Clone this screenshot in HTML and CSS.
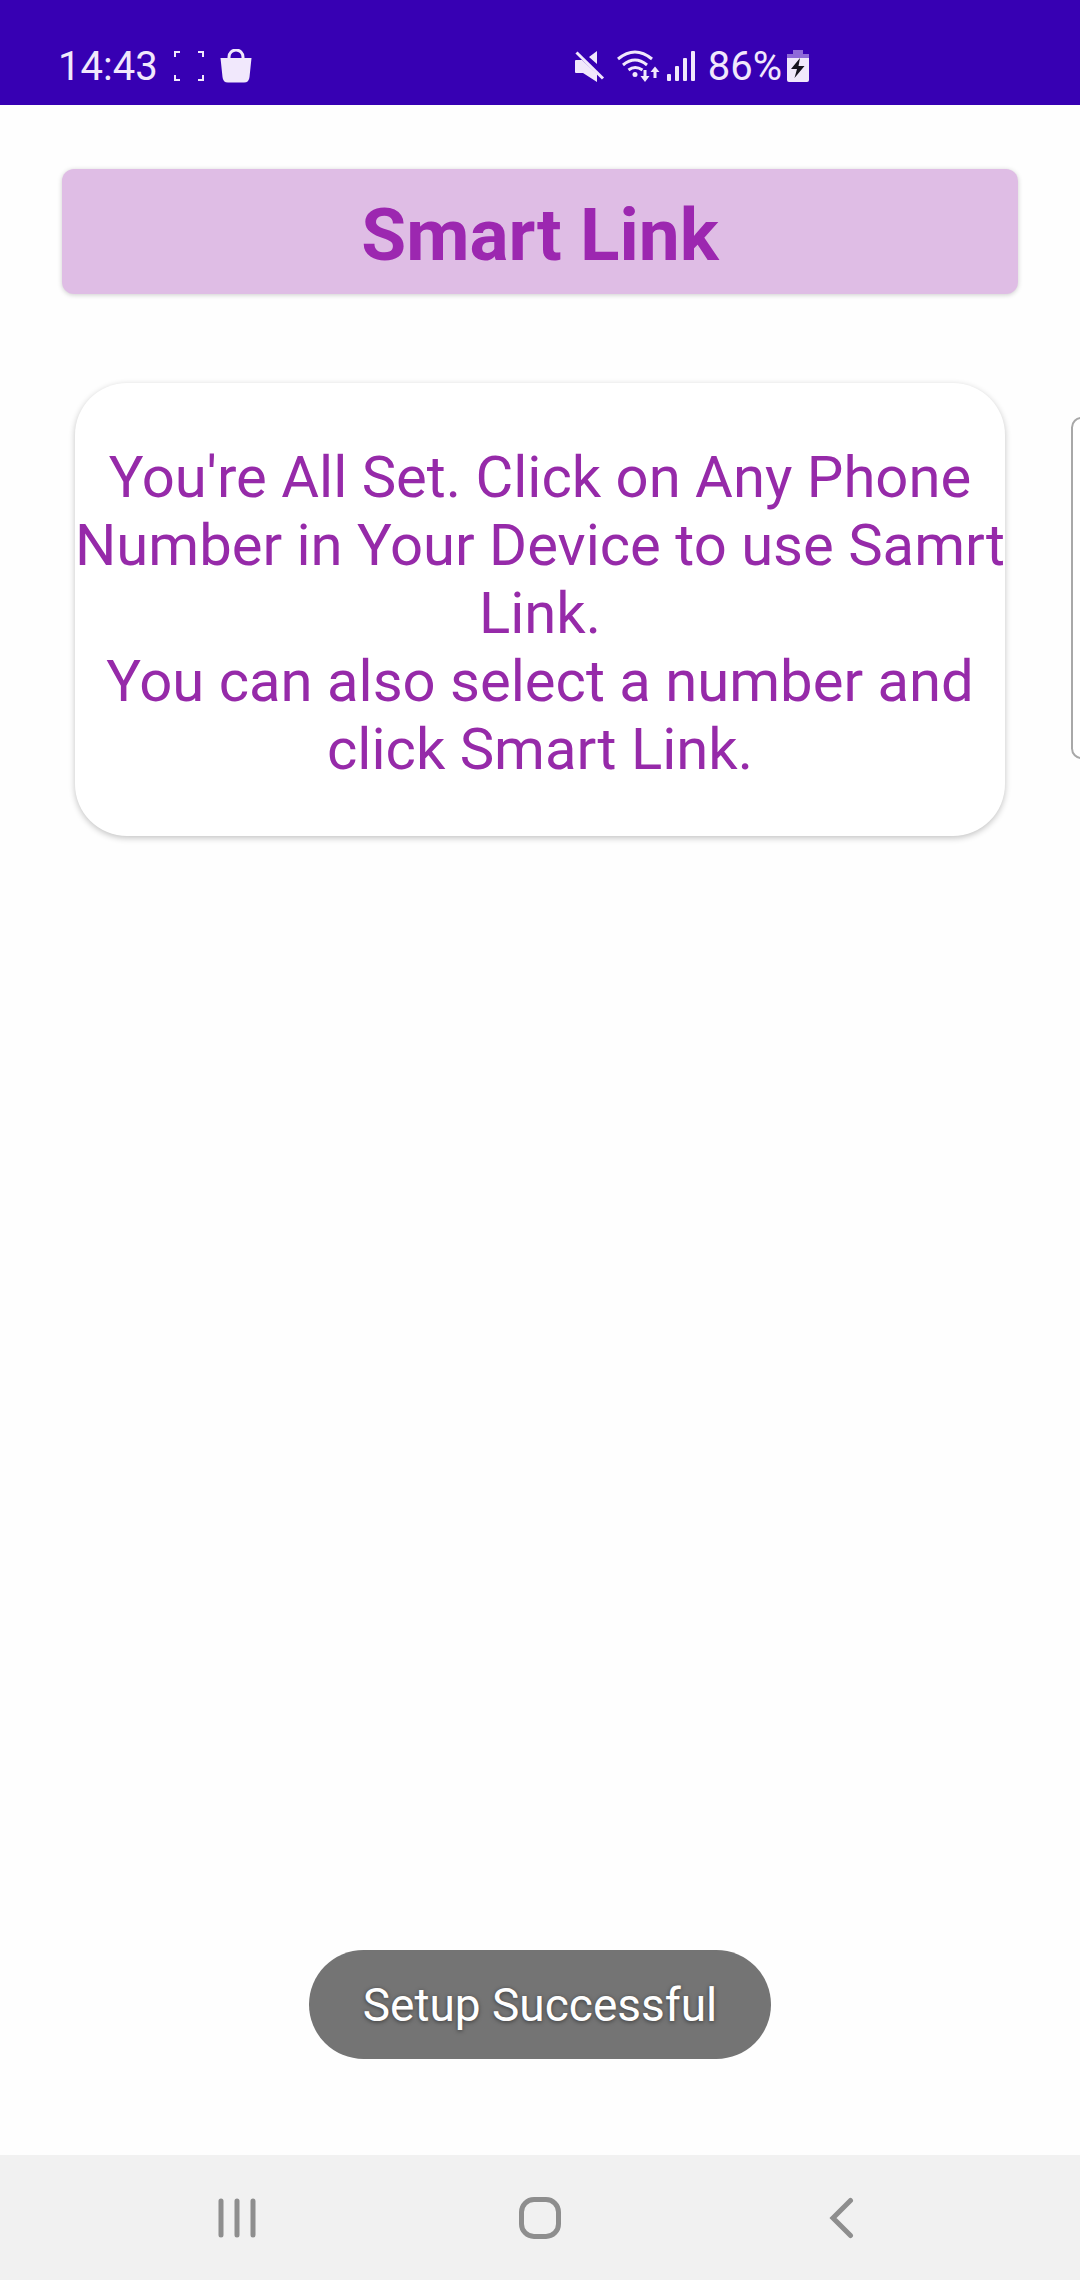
FILE: index.html
```html
<!DOCTYPE html>
<html lang="en">
<head>
<meta charset="utf-8">
<meta name="viewport" content="width=device-width, initial-scale=1">
<title>Smart Link</title>
<link rel="stylesheet" href="styles.css">
</head>
<body>
<header class="status">
  <div class="status-left">
    <span class="clock">14:43</span>
    <svg class="icon-frame" width="30" height="30" viewBox="0 0 30 30" fill="none" stroke="currentColor" stroke-width="2" aria-hidden="true"><path d="M1 6V1H6M24 1H29V6M29 24V29H24M6 29H1V24"/></svg>
    <svg width="32" height="34" viewBox="0 0 32 34" aria-hidden="true"><path fill="currentColor" d="M0.500 9H31.500L29.500 28Q29 33.500 24 33.500H8Q3 33.500 2.500 28Z"/><path fill="none" stroke="currentColor" stroke-width="3" d="M9 10V8A7 7 0 0 1 23 8V10"/></svg>
  </div>
  <div class="status-right">
    <svg width="30" height="32" viewBox="0 0 30 32" aria-hidden="true"><path fill="currentColor" d="M0 11Q0 10 1 10H7L22 24V32L8 23H1Q0 23 0 22ZM22 1V14L14 7Z"/><path stroke="#3700b3" stroke-width="2" d="M4 1L30 26"/><path fill="none" stroke="currentColor" stroke-width="3" d="M1.500 2.500L28 28.500"/></svg>
    <svg class="icon-wifi" width="43" height="32" viewBox="0 0 43 32" fill="none" stroke="currentColor" stroke-width="3" aria-hidden="true"><path d="M1 9Q18 -5 35 9M6 15Q18 5 30 15M11.500 20Q18 15 25.500 20"/><circle cx="18" cy="24.500" r="2.500" fill="currentColor" stroke="none"/><path d="M28 20V29M38 28V19"/><path fill="currentColor" stroke="none" d="M23.500 26H32.500L28 32ZM33.500 22H42.500L38 16.500Z"/></svg>
    <svg class="icon-signal" width="28" height="30" viewBox="0 0 28 30" fill="currentColor" aria-hidden="true"><rect y="23" width="4" height="7" rx="1"/><rect x="8" y="15" width="4" height="15" rx="1"/><rect x="16" y="7" width="4" height="23" rx="1"/><rect x="24" width="4" height="30" rx="1"/></svg>
    <span class="battery-level">86%</span>
    <svg class="icon-battery" width="22" height="32" viewBox="0 0 22 32" aria-hidden="true"><path fill="#8f69d8" d="M6 0H16V4H22V8H0V4H6Z"/><path fill="currentColor" d="M0 8H22V30Q22 32 20 32H2Q0 32 0 30Z"/><path fill="#17131f" d="M13 8L4 19H10L7.500 28L17.500 16H11.500Z"/></svg>
  </div>
</header>
<main class="content">
  <h1 class="title">Smart Link</h1>
  <section class="card">
    <p class="card-text">You're All Set. Click on Any Phone Number in Your Device to use Samrt Link.<br>You can also select a number and click Smart Link.</p>
  </section>
  <div class="edge-panel" aria-hidden="true"></div>
  <div class="toast" role="status">Setup Successful</div>
</main>
<nav class="navbar" aria-label="System navigation">
  <button class="nav-button" type="button" aria-label="Recent apps"><svg width="42" height="42" viewBox="0 0 42 42" fill="none" stroke="currentColor" stroke-width="5" stroke-linecap="round"><path d="M5 4V38M21 4V38M37 4V38"/></svg></button>
  <button class="nav-button" type="button" aria-label="Home"><svg width="42" height="42" viewBox="0 0 42 42" fill="none" stroke="currentColor" stroke-width="5"><rect x="2.500" y="2.500" width="37" height="37" rx="12.500"/></svg></button>
  <button class="nav-button" type="button" aria-label="Back"><svg width="42" height="42" viewBox="0 0 42 42" fill="none" stroke="currentColor" stroke-width="5" stroke-linecap="round"><path d="M28.500 3.500L11 21L28.500 38.500"/></svg></button>
</nav>
</body>
</html>
```
FILE: styles.css
```css
* {
  box-sizing: border-box;
}

body {
  margin: 0;
  min-height: 100vh;
  display: flex;
  flex-direction: column;
  background: #fefefe;
  font-family: Roboto, "Liberation Sans", sans-serif;
}

.status {
  display: flex;
  justify-content: space-between;
  align-items: center;
  height: 105px;
  padding: 26px 271px 0 58px;
  background: #3700b3;
  color: #f1e8fc;
  font-size: 40px;
  line-height: 48px;
}

.status-left,
.status-right {
  display: flex;
  align-items: center;
}

.clock,
.battery-level {
  padding-top: 2px;
}

.icon-frame {
  margin: 0 16px;
}

.icon-wifi {
  margin: 0 7px 0 12px;
}

.battery-level {
  margin: 0 5px 0 13px;
}

.content {
  position: relative;
  flex: 1;
  display: flex;
  flex-direction: column;
  align-items: stretch;
  padding: 64px 62px 96px;
  overflow: hidden;
}

.title {
  margin: 0;
  padding: 24px 0 16px;
  border-radius: 12px;
  background: #dfbde5;
  box-shadow: 0 1px 5px rgba(0, 0, 0, 0.2);
  color: #9c27b0;
  font-size: 73px;
  font-weight: 700;
  line-height: 85px;
  text-align: center;
}

.card {
  margin: 89px 13px 0;
  padding: 60px 0 53px;
  border-radius: 52px;
  background: #fff;
  box-shadow: 0 2px 6px rgba(0, 0, 0, 0.24);
}

.card-text {
  margin: 0 -4px;
  color: #962aa9;
  font-size: 58px;
  line-height: 68px;
  text-align: center;
}

.edge-panel {
  position: absolute;
  top: 312px;
  right: -12px;
  width: 21px;
  height: 342px;
  border: 2px solid #a8a8a8;
  border-radius: 14px;
  background: #fff;
}

.toast {
  align-self: center;
  margin-top: auto;
  padding: 28px 54px 26px;
  border-radius: 55px;
  background: #747474;
  color: #fff;
  font-size: 46px;
  line-height: 55px;
  text-shadow: 0 1px 4px rgba(0, 0, 0, 0.5);
}

.navbar {
  display: flex;
  justify-content: center;
  height: 125px;
  padding: 0 86px;
  background: #f1f1f1;
}

.nav-button {
  flex: 1;
  display: flex;
  align-items: center;
  justify-content: center;
  padding: 0;
  border: 0;
  background: none;
  color: #8e8e8e;
}
```
